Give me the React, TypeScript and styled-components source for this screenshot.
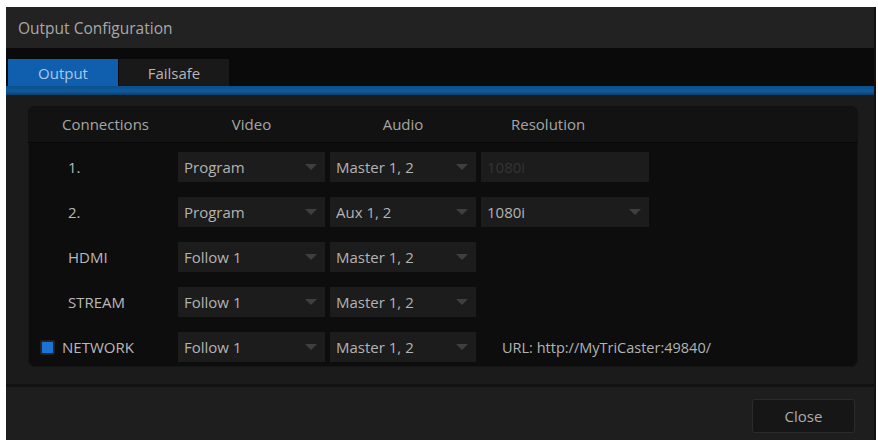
import React from 'react';
import styled, { createGlobalStyle } from 'styled-components';

const GlobalStyle = createGlobalStyle`
  html, body {
    margin: 0;
    padding: 0;
    background: #ffffff;
  }
  body {
    font-family: 'Open Sans', 'Liberation Sans', sans-serif;
  }
`;

const Dialog = styled.div`
  margin: 7px 2px 0 6px;
  width: 870px;
  height: 433px;
  display: flex;
  flex-direction: column;
  background: #1c1c1c;
  border-right: 2px solid #121212;
  box-sizing: border-box;
  & > * {
    flex-shrink: 0;
  }
`;

const TitleBar = styled.div`
  height: 41px;
  display: flex;
  align-items: center;
  padding-left: 12px;
  background: #222222;
  color: #a9a9a9;
  font-size: 15.5px;
`;

const TabStrip = styled.div`
  height: 38px;
  display: flex;
  align-items: flex-end;
  padding-left: 2px;
  background: #0a0a0a;
`;

const Tab = styled.div<{ $active?: boolean }>`
  width: 110px;
  height: 27px;
  display: flex;
  align-items: center;
  justify-content: center;
  font-size: 15px;
  background: ${p => (p.$active ? '#0f5fae' : '#191919')};
  color: ${p => (p.$active ? '#a8c8ea' : '#b5b5b5')};
  margin-right: 1px;
`;

const BlueBar = styled.div`
  height: 9px;
  background: linear-gradient(#0c4f8c, #0f5a9c 60%, #0a3d6b);
`;

const Body = styled.div`
  height: 289px;
  padding: 11px 16px 0 22px;
  background: #1b1b1b;
  box-sizing: border-box;
`;

const Panel = styled.div`
  height: 261px;
  border-radius: 8px;
  background: #0d0d0d;
  box-shadow: inset 0 0 0 1px #151515;
  display: flex;
  flex-direction: column;
  overflow: hidden;
`;

const Grid = styled.div`
  display: grid;
  grid-template-columns: 145px 147px 146px 168px 1fr;
  column-gap: 5px;
  align-items: center;
`;

const HeaderRow = styled(Grid)`
  height: 36px;
  background: #121212;
  border-bottom: 1px solid #080808;
  color: #a6a6a6;
  font-size: 15px;
`;

const HeaderCell = styled.div<{ $pad?: number; $left?: boolean }>`
  text-align: ${p => (p.$left ? 'left' : 'center')};
  padding-left: ${p => p.$pad ?? 0}px;
`;

const Rows = styled.div`
  display: flex;
  flex-direction: column;
  gap: 15px;
  padding-top: 9px;
`;

const Row = styled(Grid)`
  height: 30px;
`;

const Label = styled.div`
  display: flex;
  align-items: center;
  gap: 8px;
  padding-left: 40px;
  color: #b9b9b9;
  font-size: 15px;
`;

const Checkbox = styled.span`
  width: 11px;
  height: 11px;
  margin-left: -27px;
  background: #1c73d4;
  border: 1px solid #0b2c52;
  box-shadow: 0 0 0 1px #222;
  border-radius: 1px;
`;

const Select = styled.div<{ $disabled?: boolean }>`
  height: 30px;
  display: flex;
  align-items: center;
  justify-content: space-between;
  padding: 0 8px 0 6px;
  background: #1c1c1c;
  color: ${p => (p.$disabled ? '#343434' : '#b3b3b3')};
  font-size: 15px;
`;

const Arrow = styled.span`
  width: 0;
  height: 0;
  border-left: 6px solid transparent;
  border-right: 6px solid transparent;
  border-top: 6px solid #3f3f3f;
`;

const Url = styled.div`
  grid-column: 4 / span 2;
  padding-left: 21px;
  color: #b3b3b3;
  font-size: 14.5px;
`;

const Footer = styled.div`
  height: 56px;
  display: flex;
  justify-content: flex-end;
  align-items: flex-start;
  padding: 12px 19px 0 0;
  background: #1e1e1e;
  border-top: 3px solid #121212;
  box-sizing: border-box;
`;

const CloseButton = styled.button`
  width: 103px;
  height: 34px;
  background: #161616;
  border: 1px solid #2b2b2b;
  border-radius: 3px;
  color: #acacac;
  font-family: 'Open Sans', 'Liberation Sans', sans-serif;
  font-size: 15px;
`;

type RowData = {
  label: string;
  video: string;
  audio: string;
  resolution?: { value: string; disabled?: boolean };
  checkbox?: boolean;
  url?: string;
};

const rows: RowData[] = [
  { label: '1.', video: 'Program', audio: 'Master 1, 2', resolution: { value: '1080i', disabled: true } },
  { label: '2.', video: 'Program', audio: 'Aux 1, 2', resolution: { value: '1080i' } },
  { label: 'HDMI', video: 'Follow 1', audio: 'Master 1, 2' },
  { label: 'STREAM', video: 'Follow 1', audio: 'Master 1, 2' },
  { label: 'NETWORK', video: 'Follow 1', audio: 'Master 1, 2', checkbox: true, url: 'URL:  http://MyTriCaster:49840/' },
];

export default function App() {
  return (
    <>
      <GlobalStyle />
      <Dialog>
        <TitleBar>Output Configuration</TitleBar>
        <TabStrip>
          <Tab $active>Output</Tab>
          <Tab>Failsafe</Tab>
        </TabStrip>
        <BlueBar />
        <Body>
          <Panel>
            <HeaderRow>
              <HeaderCell $pad={10}>Connections</HeaderCell>
              <HeaderCell>Video</HeaderCell>
              <HeaderCell>Audio</HeaderCell>
              <HeaderCell $left $pad={30}>Resolution</HeaderCell>
            </HeaderRow>
            <Rows>
              {rows.map(r => (
                <Row key={r.label}>
                  <Label>
                    {r.checkbox && <Checkbox />}
                    {r.label}
                  </Label>
                  <Select>
                    {r.video}
                    <Arrow />
                  </Select>
                  <Select>
                    {r.audio}
                    <Arrow />
                  </Select>
                  {r.resolution && (
                    <Select $disabled={r.resolution.disabled}>
                      {r.resolution.value}
                      {!r.resolution.disabled && <Arrow />}
                    </Select>
                  )}
                  {r.url && <Url>{r.url}</Url>}
                </Row>
              ))}
            </Rows>
          </Panel>
        </Body>
        <Footer>
          <CloseButton>Close</CloseButton>
        </Footer>
      </Dialog>
    </>
  );
}
